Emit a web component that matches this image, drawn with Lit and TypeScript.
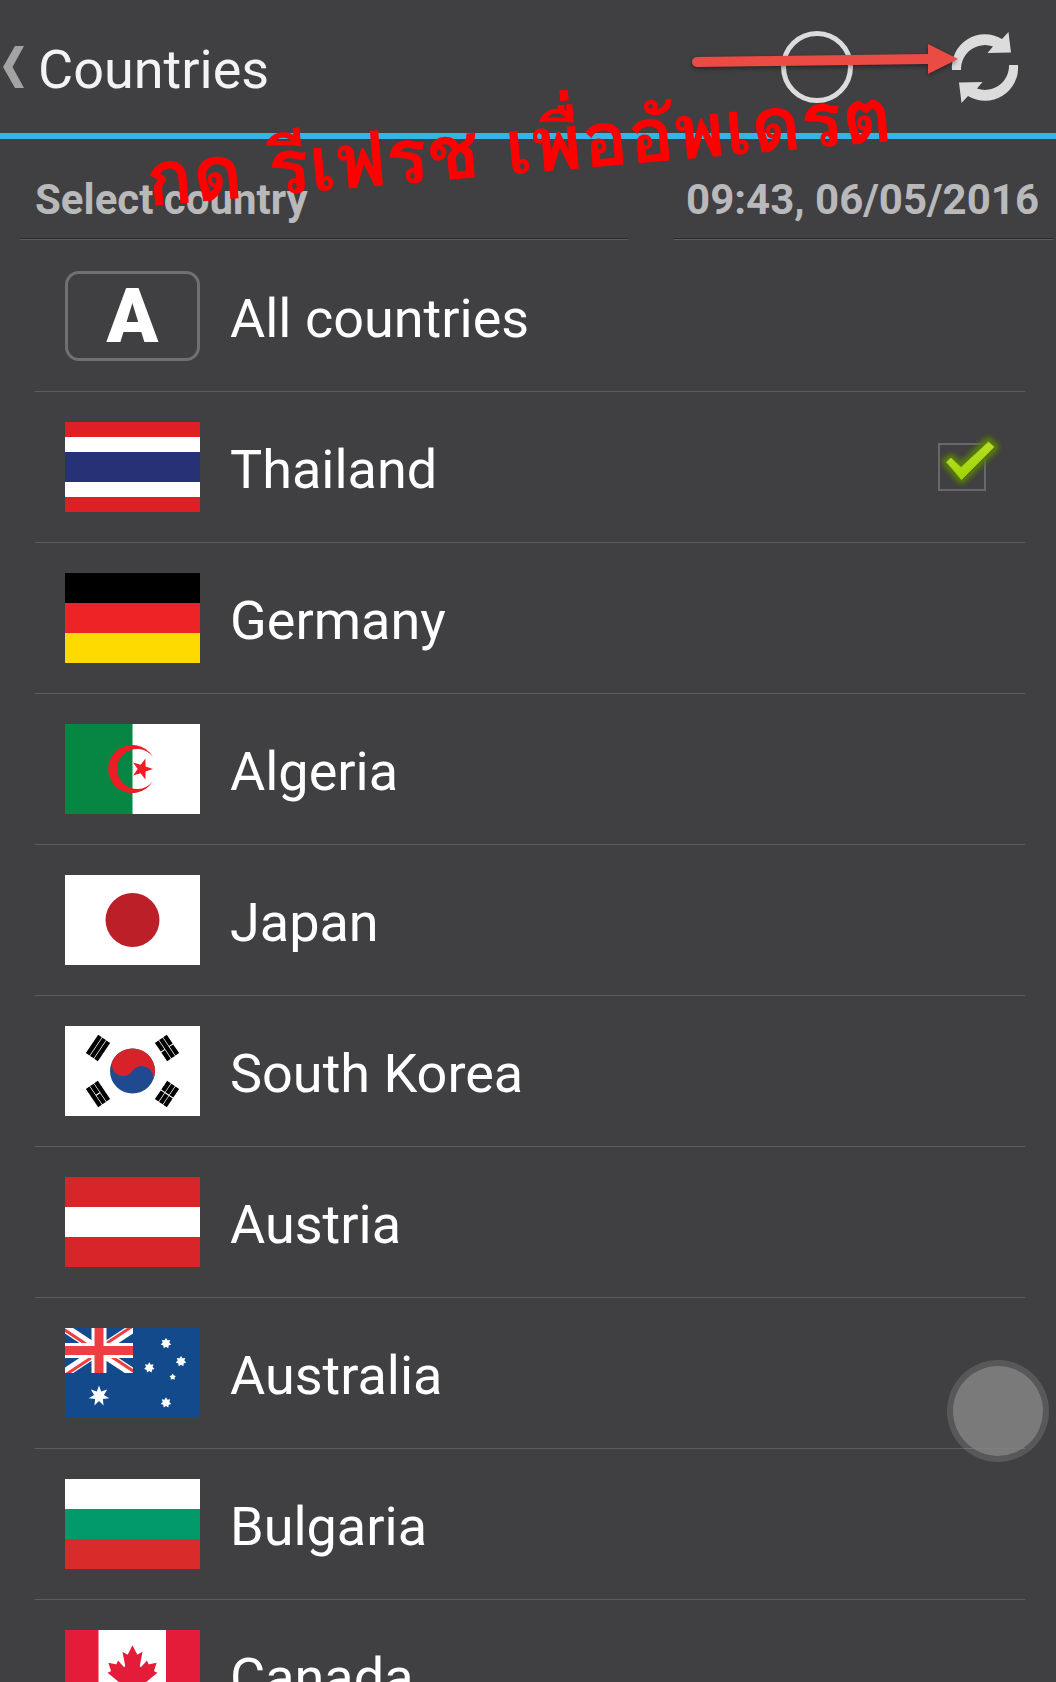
import { LitElement, html, svg, css, SVGTemplateResult } from "lit";
import { customElement, property, state } from "lit/decorators.js";

interface Country {
  id: string;
  name: string;
}

const COUNTRIES: Country[] = [
  { id: "all", name: "All countries" },
  { id: "th", name: "Thailand" },
  { id: "de", name: "Germany" },
  { id: "dz", name: "Algeria" },
  { id: "jp", name: "Japan" },
  { id: "kr", name: "South Korea" },
  { id: "at", name: "Austria" },
  { id: "au", name: "Australia" },
  { id: "bg", name: "Bulgaria" },
  { id: "ca", name: "Canada" },
];

/** Points of a star polygon; the first tip lies at the angle `turn` (degrees). */
function star(cx: number, cy: number, outer: number, inner: number, tips: number, turn: number): string {
  return Array.from({ length: tips * 2 }, (_, i) => {
    const r = i % 2 ? inner : outer;
    const a = ((turn + (i * 180) / tips) * Math.PI) / 180;
    return `${(cx + r * Math.cos(a)).toFixed(2)},${(cy + r * Math.sin(a)).toFixed(2)}`;
  }).join(" ");
}

/** Equal horizontal bands over the 135 x 90 field. */
function bands(colors: string[]): SVGTemplateResult[] {
  const h = 90 / colors.length;
  return colors.map((c, i) => svg`<rect y=${i * h} width="135" height=${h} fill=${c}></rect>`);
}

/** Three bars of a trigram; true marks a broken bar. */
function trigram(x: number, y: number, angle: number, broken: boolean[]): SVGTemplateResult {
  return svg`<g transform="translate(${x} ${y}) rotate(${angle})">
    ${broken.map((b, i) => {
      const top = -7.2 + i * 5;
      return b
        ? svg`<path d="M-11 ${top}h10.500v4.400h-10.500z M0.500 ${top}h10.500v4.400h-10.500z"></path>`
        : svg`<path d="M-11 ${top}h22v4.400h-22z"></path>`;
    })}
  </g>`;
}

const LEAF =
  "m-90 2030 45-863a95 95 0 0 0-111-98l-859 151 116-320a65 65 0 0 0-20-73l-941-762 212-99a65 65 0 0 0 34-79l-186-572 542 115a65 65 0 0 0 73-38l105-247 423 454a65 65 0 0 0 111-57l-204-1052 327 189a65 65 0 0 0 91-27l332-652 332 652a65 65 0 0 0 91 27l327-189-204 1052a65 65 0 0 0 111 57l423-454 105 247a65 65 0 0 0 73 38l542-115-186 572a65 65 0 0 0 34 79l212 99-941 762a65 65 0 0 0-20 73l116 320-859-151a95 95 0 0 0-111 98l45 863z";

const FLAGS: Record<string, () => unknown> = {
  th: () => svg`
    <rect width="135" height="90" fill="#df1f26"></rect>
    <rect y="15" width="135" height="60" fill="#fff"></rect>
    <rect y="30" width="135" height="30" fill="#273276"></rect>`,
  de: () => bands(["#000", "#ee2326", "#ffda00"]),
  dz: () => svg`
    <rect width="135" height="90" fill="#fff"></rect>
    <rect width="67.5" height="90" fill="#068543"></rect>
    <path d="M88 33A24 24 0 1 0 88 57A20 20 0 1 1 88 33Z" fill="#ee1c25"></path>
    <polygon points=${star(77, 45, 11, 4.4, 5, 0)} fill="#ee1c25"></polygon>`,
  jp: () => svg`
    <rect width="135" height="90" fill="#fff"></rect>
    <circle cx="67.5" cy="45" r="27" fill="#bd1f29"></circle>`,
  kr: () => svg`
    <rect width="135" height="90" fill="#fff"></rect>
    <g transform="translate(67.5 45) rotate(33.7)">
      <circle r="22.5" fill="#1f4a8f"></circle>
      <path d="M-22.5 0A22.5 22.5 0 0 1 22.5 0A11.25 11.25 0 0 0 0 0A11.25 11.25 0 0 1 -22.5 0Z" fill="#d8222a"></path>
    </g>
    ${trigram(33, 22, -56, [false, false, false])}
    ${trigram(102, 22, 56, [true, false, true])}
    ${trigram(33, 68, 56, [false, true, false])}
    ${trigram(102, 68, -56, [true, true, true])}`,
  at: () => bands(["#d82529", "#fff", "#d82529"]),
  au: () => svg`
    <rect width="135" height="90" fill="#124a8c"></rect>
    <svg width="68" height="45" viewBox="0 0 68 45">
      <path d="M0 0L68 45M68 0L0 45" stroke="#fff" stroke-width="9"></path>
      <path d="M-1 1.5L33 24M69 43.5L35 21M67 -1.5L33 21M1 46.5L35 24" stroke="#ef3e42" stroke-width="3"></path>
      <path d="M34 0V45M0 22.5H68" stroke="#fff" stroke-width="15"></path>
      <path d="M34 0V45M0 22.5H68" stroke="#ef3e42" stroke-width="9"></path>
    </svg>
    <g fill="#fff">
      <polygon points=${star(34, 68, 10.5, 5, 7, -90)}></polygon>
      <polygon points=${star(101, 15.3, 5.4, 3.4, 7, -90)}></polygon>
      <polygon points=${star(116, 33.3, 5.4, 3.4, 7, -90)}></polygon>
      <polygon points=${star(84.3, 39.7, 5.4, 3.4, 7, -90)}></polygon>
      <polygon points=${star(107.7, 49, 3.4, 2, 5, -90)}></polygon>
      <polygon points=${star(101, 74.7, 5.4, 3.4, 7, -90)}></polygon>
    </g>`,
  bg: () => bands(["#fff", "#039a6b", "#d92b2a"]),
  ca: () => svg`
    <rect width="135" height="90" fill="#fff"></rect>
    <rect width="33.5" height="90" fill="#e51b3a"></rect>
    <rect x="101" width="34" height="90" fill="#e51b3a"></rect>
    <path d=${LEAF} transform="translate(67.5 42) scale(0.0134)" fill="#e51b3a"></path>`,
};

@customElement("country-flag")
export class CountryFlag extends LitElement {
  @property() code = "";

  static styles = css`
    :host {
      display: block;
      flex: none;
      width: 135px;
      height: 90px;
    }
    .flag {
      display: block;
      width: 100%;
      height: 100%;
    }
    .all {
      box-sizing: border-box;
      display: flex;
      align-items: center;
      justify-content: center;
      height: 100%;
      border: 3px solid #707072;
      border-radius: 14px;
      color: #fff;
      font: 900 76px/84px Roboto, "Liberation Sans", sans-serif;
    }
  `;

  render() {
    const draw = FLAGS[this.code];
    return draw
      ? html`<svg class="flag" viewBox="0 0 135 90" aria-hidden="true">${draw()}</svg>`
      : html`<div class="all" aria-hidden="true">A</div>`;
  }
}

@customElement("country-row")
export class CountryRow extends LitElement {
  @property({ attribute: false }) country!: Country;
  @property({ type: Boolean }) checked = false;

  static styles = css`
    :host {
      display: block;
      border-bottom: 1px solid #5c5c5e;
    }
    .row {
      display: flex;
      align-items: center;
      gap: 30px;
      padding: 30px 39px 30px 30px;
      cursor: pointer;
    }
    .name {
      flex: 1;
      padding-top: 6px;
      font-size: 54px;
      line-height: 64px;
      color: #fff;
    }
    .tick {
      position: relative;
      width: 48px;
      height: 48px;
    }
    .box {
      appearance: none;
      box-sizing: border-box;
      display: block;
      width: 48px;
      height: 48px;
      margin: 0;
      border: 2px solid transparent;
    }
    .box:checked {
      border-color: #68686c;
    }
    .box:focus-visible {
      outline: 2px solid #33b5e5;
    }
    .mark {
      position: absolute;
      inset: 0;
      width: 48px;
      height: 48px;
      overflow: visible;
      pointer-events: none;
    }
  `;

  private toggle(e: Event) {
    const on = (e.target as HTMLInputElement).checked;
    this.dispatchEvent(new CustomEvent("pick", { detail: on }));
  }

  render() {
    return html`
      <label class="row">
        <country-flag code=${this.country.id}></country-flag>
        <span class="name">${this.country.name}</span>
        <span class="tick">
          <input class="box" type="checkbox" .checked=${this.checked} @change=${this.toggle} />
          ${this.checked
            ? html`<svg class="mark" viewBox="0 0 48 48" aria-hidden="true">
                <defs>
                  <filter id="glow" x="-50%" y="-50%" width="200%" height="200%">
                    <feGaussianBlur stdDeviation="2.6"></feGaussianBlur>
                  </filter>
                  <linearGradient id="lime" x1="0" y1="0" x2="0.4" y2="1">
                    <stop offset="0" stop-color="#c4e23c"></stop>
                    <stop offset="1" stop-color="#9cd400"></stop>
                  </linearGradient>
                </defs>
                <path
                  d="M9 19L13 16L23 25L50.500 -1L56 4L23.500 36Z"
                  fill="#567a08"
                  stroke="#567a08"
                  stroke-width="10"
                  stroke-linejoin="round"
                  filter="url(#glow)"
                ></path>
                <path
                  d="M8.500 19L13 15L23 24.500L50.500 -1L56 4L23.500 36.500Z"
                  fill="url(#lime)"
                  stroke="#9cc814"
                  stroke-width="1"
                ></path>
              </svg>`
            : null}
        </span>
      </label>
    `;
  }
}

@customElement("app-root")
export class AppRoot extends LitElement {
  @state() private selected = new Set<string>(["th"]);

  static styles = css`
    :host {
      position: relative;
      display: flex;
      flex-direction: column;
      height: 100vh;
      overflow: hidden;
      background: #403f41;
      font-family: Roboto, "Liberation Sans", sans-serif;
    }
    .bar {
      display: flex;
      flex: none;
      align-items: center;
      height: 133px;
      padding: 0 35px 0 3px;
      border-bottom: 6px solid #33b5e5;
    }
    .button {
      display: block;
      padding: 0;
      border: 0;
      background: none;
      cursor: pointer;
    }
    .icon {
      display: block;
    }
    .title {
      flex: 1;
      margin: 0;
      padding: 6px 0 0 13px;
      font-size: 54px;
      font-weight: 400;
      line-height: 64px;
      color: #f3f3f5;
    }
    .actions {
      display: flex;
      gap: 96px;
    }
    .heads {
      display: grid;
      flex: none;
      grid-template-columns: 608fr 379fr;
      gap: 46px;
      padding: 0 3px 0 20px;
    }
    .head {
      min-width: 0;
      margin: 0;
      padding: 35px 14px 13px 15px;
      border-bottom: 1px solid #5e5e60;
      box-shadow: inset 0 -1px #29292b;
      font-size: 42px;
      font-weight: 700;
      line-height: 52px;
      color: #b9b9bb;
      white-space: nowrap;
    }
    .time {
      padding-left: 0;
      text-align: right;
    }
    .list {
      flex: 1;
      min-height: 0;
      margin: 0;
      padding: 1px 31px 0 35px;
      overflow-y: auto;
      scrollbar-width: none;
      list-style: none;
    }
    .arrow {
      position: absolute;
      top: 40px;
      right: 95px;
    }
    .note {
      position: absolute;
      top: 74px;
      right: 164px;
      margin: 0;
      transform: rotate(-5deg);
      transform-origin: 100% 50%;
      font-family: Loma, Garuda, Waree, "Noto Sans Thai Looped", "Noto Looped Thai", "Noto Sans Thai", sans-serif;
      font-size: 77px;
      font-weight: 700;
      line-height: 80px;
      color: #f00;
      white-space: nowrap;
      pointer-events: none;
    }
    .float {
      position: absolute;
      right: 7px;
      bottom: 220px;
      box-sizing: border-box;
      width: 102px;
      height: 102px;
      border: 6px solid rgba(255, 255, 255, 0.13);
      border-radius: 50%;
      background: rgba(133, 133, 134, 0.85);
      background-clip: padding-box;
    }
  `;

  private pick(id: string, on: boolean) {
    const next = new Set(this.selected);
    if (on) next.add(id);
    else next.delete(id);
    this.selected = next;
  }

  render() {
    return html`
      <header class="bar">
        <button class="button" aria-label="Back">
          <svg class="icon" width="22" height="42" viewBox="0 0 22 42">
            <path d="M12 0H21L9.500 21L21 42H12L0 21Z" fill="#a3a3a4"></path>
          </svg>
        </button>
        <h1 class="title">Countries</h1>
        <div class="actions">
          <button class="button" aria-label="Status">
            <svg class="icon" width="72" height="72" viewBox="0 0 72 72">
              <circle cx="36" cy="36" r="33.500" fill="none" stroke="#dcdcdd" stroke-width="5"></circle>
            </svg>
          </button>
          <button class="button" aria-label="Refresh">
            <svg class="icon" width="72" height="72" viewBox="0 1 72 72" overflow="visible">
              <g fill="#dcdcdd">
                <path id="half" d="M3 40L12 40A24 24 0 0 1 44 16.500L38.500 23L62 22.500L59.500 2L53 9A33 33 0 0 0 3 40Z"></path>
                <use href="#half" transform="rotate(180 36 37.500)"></use>
              </g>
            </svg>
          </button>
        </div>
      </header>
      <div class="heads">
        <h2 class="head">Select country</h2>
        <p class="head time">09:43, 06/05/2016</p>
      </div>
      <ul class="list">
        ${COUNTRIES.map(
          (c) => html`<li>
            <country-row
              .country=${c}
              .checked=${this.selected.has(c.id)}
              @pick=${(e: CustomEvent<boolean>) => this.pick(c.id, e.detail)}
            ></country-row>
          </li>`
        )}
      </ul>
      <svg class="arrow" width="270" height="40" viewBox="0 0 270 40" aria-hidden="true" overflow="visible">
        <g fill="#ea4b44" style="filter: drop-shadow(0 2px 2px rgba(0, 0, 0, 0.4))">
          <path d="M6 17L237 14V4L267 19L237 34V24L6 27A5 5 0 0 1 6 17Z"></path>
        </g>
      </svg>
      <p class="note" lang="th">กด รีเฟรช เพื่ออัพเดรต</p>
      <button class="float" aria-label="Assistive menu"></button>
    `;
  }
}
